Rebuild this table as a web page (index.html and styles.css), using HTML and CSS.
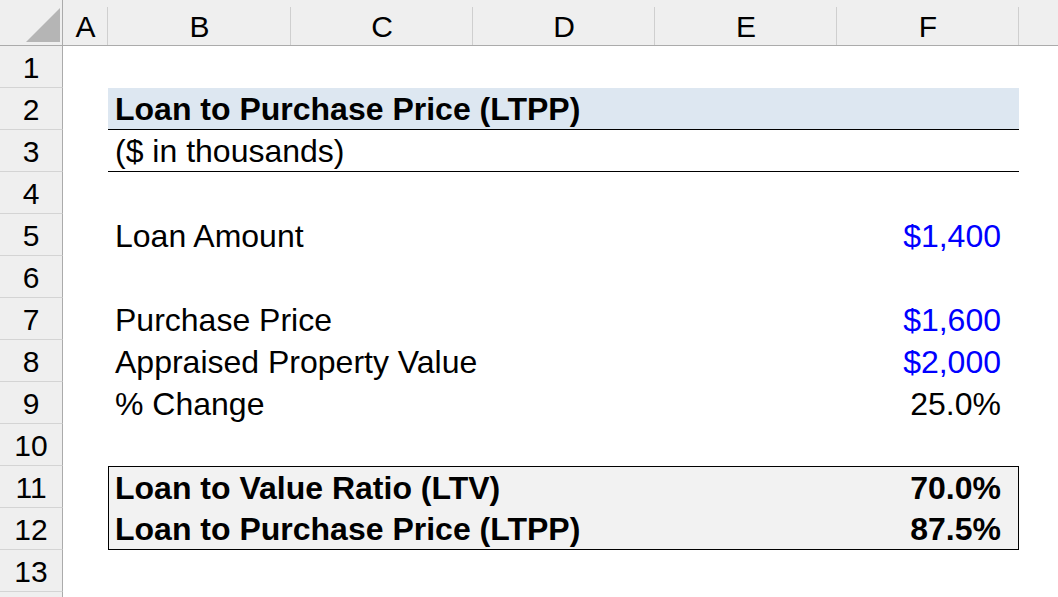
FILE: index.html
```html
<!DOCTYPE html>
<html>
<head>
<meta charset="utf-8">
<link rel="stylesheet" href="styles.css">
</head>
<body>
<div class="sheet">
  <div class="corner"><svg class="tri" width="34" height="34" viewBox="0 0 34 34"><polygon points="34,0 34,34 0,34" fill="#b5b5b5"/></svg></div>
  <div class="colh">A</div>
  <div class="colh">B</div>
  <div class="colh">C</div>
  <div class="colh">D</div>
  <div class="colh">E</div>
  <div class="colh">F</div>
  <div class="colh last"></div>

  <div class="rowh r1">1</div>
  <div class="rowh r2">2</div>
  <div class="rowh r3">3</div>
  <div class="rowh r4">4</div>
  <div class="rowh r5">5</div>
  <div class="rowh r6">6</div>
  <div class="rowh r7">7</div>
  <div class="rowh r8">8</div>
  <div class="rowh r9">9</div>
  <div class="rowh r10">10</div>
  <div class="rowh r11">11</div>
  <div class="rowh r12">12</div>
  <div class="rowh r13">13</div>
  <div class="rowh r14"></div>

  <div class="band title r2"><span class="bold">Loan to Purchase Price (LTPP)</span></div>
  <div class="band sub r3"><span>($ in thousands)</span></div>

  <div class="band r5"><span>Loan Amount</span><span class="val blue">$1,400</span></div>
  <div class="band r7"><span>Purchase Price</span><span class="val blue">$1,600</span></div>
  <div class="band r8"><span>Appraised Property Value</span><span class="val blue">$2,000</span></div>
  <div class="band r9"><span>% Change</span><span class="val">25.0%</span></div>

  <div class="box">
    <div class="line"><span>Loan to Value Ratio (LTV)</span><span class="val">70.0%</span></div>
    <div class="line"><span>Loan to Purchase Price (LTPP)</span><span class="val">87.5%</span></div>
  </div>
</div>
</body>
</html>
```

FILE: styles.css
```css
html, body {
  margin: 0;
  padding: 0;
  background: #ffffff;
}
body {
  width: 1058px;
  height: 597px;
  overflow: hidden;
  font-family: "Liberation Sans", Arial, sans-serif;
  color: #000;
}
.sheet {
  display: grid;
  grid-template-columns: 63px 45px 183px 182px 182px 182px 182px 1fr;
  grid-template-rows: 46px repeat(13, 42px) 1fr;
  width: 1058px;
  height: 597px;
}
.corner {
  grid-column: 1;
  grid-row: 1;
  background: #efefef;
  border-right: 1px solid #ababab;
  border-bottom: 1px solid #ababab;
  box-sizing: border-box;
  display: flex;
  align-items: flex-end;
  justify-content: flex-end;
  padding: 0 2px 3px 0;
}
.tri { display: block; }
.colh {
  grid-row: 1;
  background: #efefef;
  border-bottom: 1px solid #ababab;
  box-sizing: border-box;
  font-size: 30px;
  line-height: 1;
  display: flex;
  align-items: center;
  justify-content: center;
  padding-top: 8px;
  position: relative;
}
.colh::after {
  content: "";
  position: absolute;
  right: 0;
  top: 7px;
  bottom: 0;
  width: 1px;
  background: #cfcfcf;
}
.colh.last::after { display: none; }
.rowh {
  grid-column: 1;
  background: #efefef;
  border-right: 1px solid #ababab;
  border-bottom: 1px solid #d4d4d4;
  box-sizing: border-box;
  font-size: 30px;
  display: flex;
  align-items: center;
  justify-content: center;
  padding-top: 3px;
}
.rowh.r14 { border-bottom: none; }
.r1 { grid-row: 2; }
.r2 { grid-row: 3; }
.r3 { grid-row: 4; }
.r4 { grid-row: 5; }
.r5 { grid-row: 6; }
.r6 { grid-row: 7; }
.r7 { grid-row: 8; }
.r8 { grid-row: 9; }
.r9 { grid-row: 10; }
.r10 { grid-row: 11; }
.r11 { grid-row: 12; }
.r12 { grid-row: 13; }
.r13 { grid-row: 14; }
.r14 { grid-row: 15; }

.band {
  grid-column: 3 / 8;
  display: flex;
  justify-content: space-between;
  align-items: center;
  font-size: 32px;
  line-height: 42px;
  padding: 1px 18px 0 7px;
  box-sizing: border-box;
  white-space: nowrap;
}
.title {
  background: #dde7f1;
  border-bottom: 1px solid #000;
}
.sub {
  border-bottom: 1px solid #000;
}
.bold { font-weight: bold; }
.blue { color: #0000ff; }

.box {
  grid-column: 3 / 8;
  grid-row: 12 / 14;
  background: #f2f2f2;
  border: 1px solid #000;
  box-sizing: border-box;
  display: flex;
  flex-direction: column;
  font-weight: bold;
  font-size: 32px;
  white-space: nowrap;
}
.line {
  height: 41px;
  line-height: 42px;
  display: flex;
  justify-content: space-between;
  padding: 0 17px 0 6px;
}
```
